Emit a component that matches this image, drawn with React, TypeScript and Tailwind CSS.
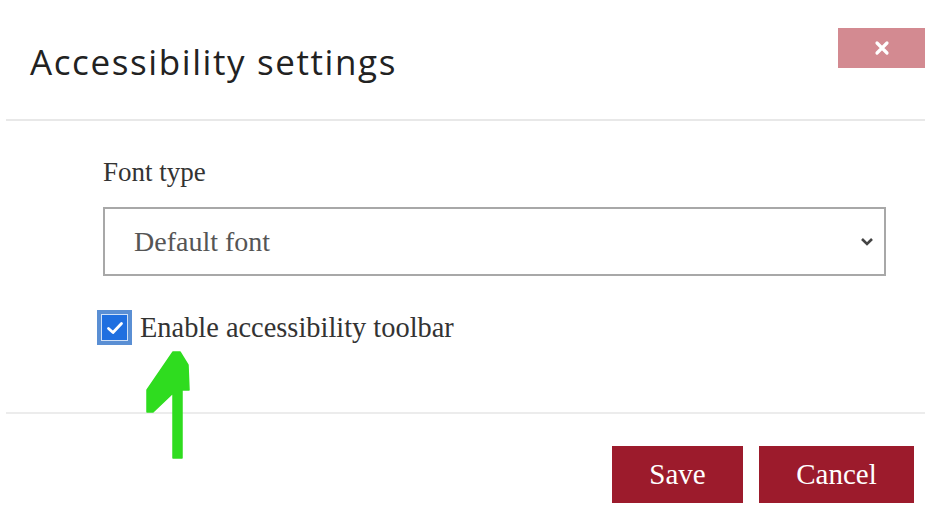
import React, { useState } from 'react';

const serif = "font-['Liberation_Serif','Times_New_Roman',serif]";

const App: React.FC = () => {
  const [enabled, setEnabled] = useState(true);

  return (
    <div className="relative w-[947px] h-[530px] bg-white overflow-hidden">
      {/* Header */}
      <div className="flex justify-between items-start h-[119px] pl-[30px] pr-[22px]">
        <h2 className="mt-[40px] text-[35px] leading-[44px] text-[#222] font-['Open_Sans',sans-serif] tracking-[1.6px]">
          Accessibility settings
        </h2>
        <button className="mt-[28px] w-[87px] h-[40px] bg-[#d38a91] flex items-center justify-center">
          <svg width="16" height="16" viewBox="0 0 16 16">
            <path d="M3 3 L13 13 M13 3 L3 13" stroke="white" strokeWidth="3.2" strokeLinecap="round" />
          </svg>
        </button>
      </div>
      <div className="ml-[6px] mr-[22px] h-[2px] bg-[#e8e8e8]" />

      {/* Body */}
      <div className="h-[291px] pl-[103px] pr-[61px] pt-[36px]">
        <label className={`block text-[27px] leading-[30px] text-[#333] ${serif}`}>Font type</label>
        <div className="mt-[20px] h-[69px] border-2 border-[#a8a8a8] flex items-center justify-between pl-[29px] pr-[10px]">
          <span className={`text-[28px] text-[#555] ${serif}`}>Default font</span>
          <svg width="14" height="10" viewBox="0 0 14 10">
            <path d="M2 2 L7 7 L12 2" fill="none" stroke="#444" strokeWidth="2.6" />
          </svg>
        </div>
        <div className="mt-[34px] flex items-center -ml-[6px]">
          <button
            onClick={() => setEnabled(!enabled)}
            className="w-[35px] h-[35px] bg-[#5a8fd4] flex items-center justify-center"
          >
            <span className="w-[27px] h-[27px] bg-[#1f6fe0] border border-[#cfe0f7] flex items-center justify-center">
              {enabled && (
                <svg width="18" height="14" viewBox="0 0 18 14">
                  <path d="M2.5 7.5 L7 11.5 L15.5 2.5" fill="none" stroke="white" strokeWidth="2.8" strokeLinecap="round" strokeLinejoin="round" />
                </svg>
              )}
            </span>
          </button>
          <span className={`ml-[8px] text-[28.4px] leading-[32px] text-[#333] ${serif}`}>
            Enable accessibility toolbar
          </span>
        </div>
      </div>
      <div className="ml-[6px] mr-[22px] h-[2px] bg-[#ececec]" />

      {/* Footer */}
      <div className="flex justify-end gap-[16px] pt-[32px] pr-[33px]">
        <button className={`w-[131px] h-[57px] bg-[#9c1b2c] text-white text-[29px] ${serif}`}>Save</button>
        <button className={`w-[155px] h-[57px] bg-[#9c1b2c] text-white text-[29px] ${serif}`}>Cancel</button>
      </div>

      {/* Annotation arrow */}
      <svg className="absolute left-0 top-0 pointer-events-none" width="947" height="530">
        <polygon
          points="173,352 180,352 188,365 189,390 182,390 182,458 173,458 173,393 153,412 147,412 147,390"
          fill="#2fdc1f"
          strokeLinejoin="round"
          stroke="#2fdc1f"
          strokeWidth="1.5"
        />
      </svg>
    </div>
  );
};

export default App;
